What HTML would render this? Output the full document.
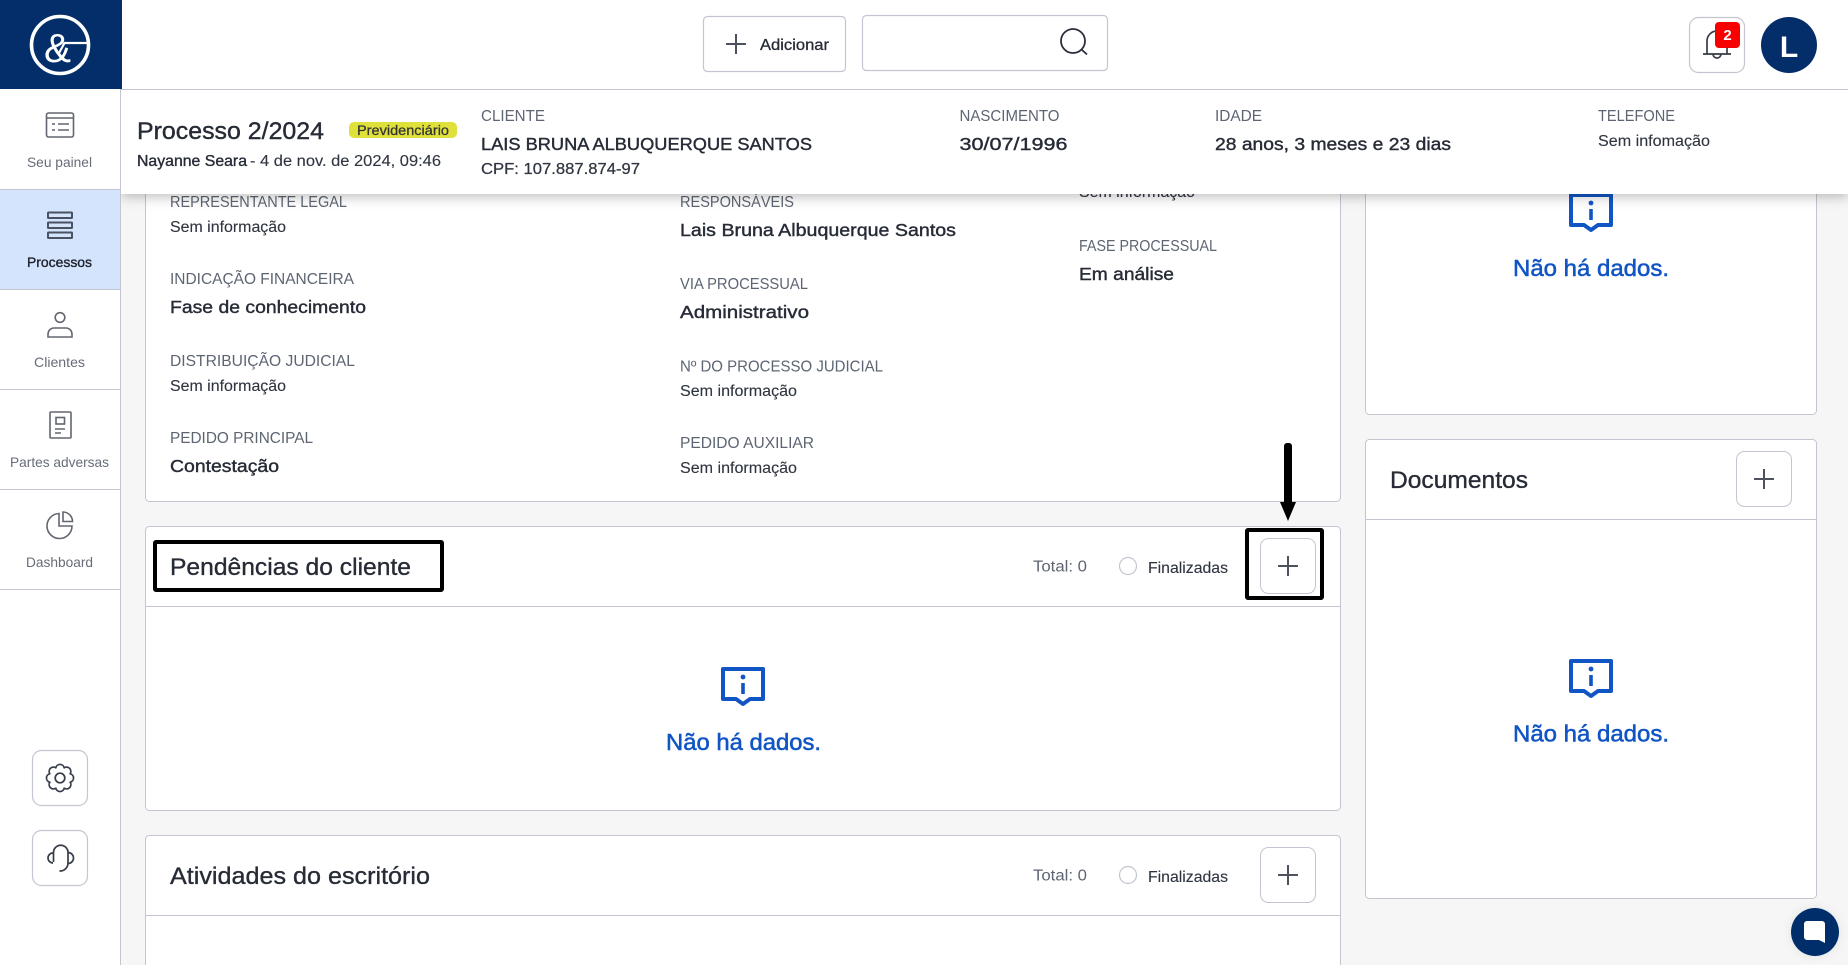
<!DOCTYPE html>
<html lang="pt-BR">
<head>
<meta charset="utf-8">
<title>Processo 2/2024</title>
<style>
html,body{margin:0;padding:0;width:1848px;height:965px;overflow:hidden;background:#f6f6f6}
svg{display:block;width:1848px;height:965px;overflow:hidden}
text{font-family:"Liberation Sans",sans-serif;white-space:pre}
.l{font-size:15.5px;fill:#5d6573;transform:translateY(-.8px)}
.b{font-size:15.5px;fill:#2f3540;stroke:#2f3540;stroke-width:.12}
.v{font-size:17.5px;fill:#262b36;stroke:#262b36;stroke-width:.4}
.h{font-size:24px;fill:#262b36;stroke:#262b36;stroke-width:.35}
.n{font-size:14px;fill:#666c78}
.e{font-size:23.5px;fill:#1155c4;stroke:#1155c4;stroke-width:.55}
.card{fill:#fff;stroke:#c3c6d0;stroke-width:1}
.line{stroke:#c3c6d0;stroke-width:1}
.ic{fill:none;stroke:#62666f;stroke-width:1.6}
.ib{fill:none;stroke:#363c48;stroke-width:1.7}
.pl{stroke:#4d525c;stroke-width:2}
.anno{fill:none;stroke:#000;stroke-width:4}
</style>
</head>
<body>
<svg width="1848" height="965" viewBox="0 0 1848 965" xmlns="http://www.w3.org/2000/svg">
<defs>
<filter id="sh" x="-2%" y="-20%" width="104%" height="160%"><feDropShadow dx="0" dy="3" stdDeviation="6" flood-color="#000" flood-opacity=".25"/></filter>
<filter id="sh2" x="-30%" y="-30%" width="160%" height="160%"><feDropShadow dx="0" dy="0" stdDeviation="5" flood-color="#000" flood-opacity=".08"/></filter>
</defs>

<rect width="1848" height="965" fill="#f6f6f6"/>

<!-- Card 1 -->
<rect class="card" x="145.5" y="120.5" width="1195" height="381" rx="4"/>
<text class="b" x="1079" y="197" textLength="116" lengthAdjust="spacingAndGlyphs">Sem informação</text>
<text class="l" x="170" y="208" textLength="177" lengthAdjust="spacingAndGlyphs">REPRESENTANTE LEGAL</text>
<text class="b" x="170" y="232" textLength="116" lengthAdjust="spacingAndGlyphs">Sem informação</text>
<text class="l" x="170" y="285" textLength="184" lengthAdjust="spacingAndGlyphs">INDICAÇÃO FINANCEIRA</text>
<text class="v" x="170" y="313" textLength="196" lengthAdjust="spacingAndGlyphs">Fase de conhecimento</text>
<text class="l" x="170" y="367" textLength="185" lengthAdjust="spacingAndGlyphs">DISTRIBUIÇÃO JUDICIAL</text>
<text class="b" x="170" y="391" textLength="116" lengthAdjust="spacingAndGlyphs">Sem informação</text>
<text class="l" x="170" y="444" textLength="143" lengthAdjust="spacingAndGlyphs">PEDIDO PRINCIPAL</text>
<text class="v" x="170" y="472" textLength="109" lengthAdjust="spacingAndGlyphs">Contestação</text>

<text class="l" x="680" y="208" textLength="114" lengthAdjust="spacingAndGlyphs">RESPONSÁVEIS</text>
<text class="v" x="680" y="236" textLength="276" lengthAdjust="spacingAndGlyphs">Lais Bruna Albuquerque Santos</text>
<text class="l" x="680" y="290" textLength="128" lengthAdjust="spacingAndGlyphs">VIA PROCESSUAL</text>
<text class="v" x="680" y="318" textLength="129" lengthAdjust="spacingAndGlyphs">Administrativo</text>
<text class="l" x="680" y="372.500" textLength="203" lengthAdjust="spacingAndGlyphs">Nº DO PROCESSO JUDICIAL</text>
<text class="b" x="680" y="396" textLength="117" lengthAdjust="spacingAndGlyphs">Sem informação</text>
<text class="l" x="680" y="449" textLength="134" lengthAdjust="spacingAndGlyphs">PEDIDO AUXILIAR</text>
<text class="b" x="680" y="473" textLength="117" lengthAdjust="spacingAndGlyphs">Sem informação</text>

<text class="l" x="1079" y="252" textLength="138" lengthAdjust="spacingAndGlyphs">FASE PROCESSUAL</text>
<text class="v" x="1079" y="280" textLength="95" lengthAdjust="spacingAndGlyphs">Em análise</text>

<!-- Pendências -->
<rect class="card" x="145.5" y="526.5" width="1195" height="284" rx="4"/>
<line class="line" x1="146" y1="606.500" x2="1340" y2="606.500"/>
<text class="h" x="170" y="575" textLength="241" lengthAdjust="spacingAndGlyphs">Pendências do cliente</text>
<text class="l" x="1033" y="572.500" textLength="54" lengthAdjust="spacingAndGlyphs">Total: 0</text>
<circle cx="1128" cy="566" r="8.5" fill="#fff" stroke="#c3c6d0" stroke-width="1.2"/>
<text class="b" x="1148" y="573" textLength="80" lengthAdjust="spacingAndGlyphs">Finalizadas</text>
<rect x="1260.5" y="538.5" width="55" height="55" rx="8" fill="#fff" stroke="#c3c6d0"/>
<path class="pl" d="M1288 556v20M1278 566h20"/>

<path d="M723 669H763V699H750L743 704L736 699H723Z" fill="none" stroke="#1155c4" stroke-width="4" stroke-linejoin="round"/>
<circle cx="743" cy="677" r="2.4" fill="#1155c4"/>
<line x1="743" y1="683" x2="743" y2="694" stroke="#1155c4" stroke-width="3.6"/>
<text class="e" x="666" y="750" textLength="155" lengthAdjust="spacingAndGlyphs">Não há dados.</text>

<!-- Atividades (runs off the bottom of the frame, so no bottom edge is drawn) -->
<path class="card" d="M145.500 965V839.500A4 4 0 0 1 149.500 835.500H1336.500A4 4 0 0 1 1340.500 839.500V965"/>
<line class="line" x1="146" y1="915.500" x2="1340" y2="915.500"/>
<text class="h" x="170" y="884" textLength="260" lengthAdjust="spacingAndGlyphs">Atividades do escritório</text>
<text class="l" x="1033" y="881.500" textLength="54" lengthAdjust="spacingAndGlyphs">Total: 0</text>
<circle cx="1128" cy="875" r="8.5" fill="#fff" stroke="#c3c6d0" stroke-width="1.2"/>
<text class="b" x="1148" y="882" textLength="80" lengthAdjust="spacingAndGlyphs">Finalizadas</text>
<rect x="1260.5" y="847.5" width="55" height="55" rx="8" fill="#fff" stroke="#c3c6d0"/>
<path class="pl" d="M1288 865v20M1278 875h20"/>

<!-- Right column -->
<rect class="card" x="1365.5" y="120.5" width="451" height="294" rx="4"/>
<path d="M1571 195H1611V225H1598L1591 230L1584 225H1571Z" fill="none" stroke="#1155c4" stroke-width="4" stroke-linejoin="round"/>
<circle cx="1591" cy="203" r="2.4" fill="#1155c4"/>
<line x1="1591" y1="209" x2="1591" y2="220" stroke="#1155c4" stroke-width="3.6"/>
<text class="e" x="1513" y="276" textLength="156" lengthAdjust="spacingAndGlyphs">Não há dados.</text>

<rect class="card" x="1365.5" y="439.5" width="451" height="459" rx="4"/>
<line class="line" x1="1366" y1="519.500" x2="1816" y2="519.500"/>
<text class="h" x="1390" y="488" textLength="138" lengthAdjust="spacingAndGlyphs">Documentos</text>
<rect x="1736.5" y="451.5" width="55" height="55" rx="8" fill="#fff" stroke="#c3c6d0"/>
<path class="pl" d="M1764 469v20M1754 479h20"/>
<path d="M1571 661H1611V691H1598L1591 696L1584 691H1571Z" fill="none" stroke="#1155c4" stroke-width="4" stroke-linejoin="round"/>
<circle cx="1591" cy="669" r="2.4" fill="#1155c4"/>
<line x1="1591" y1="675" x2="1591" y2="686" stroke="#1155c4" stroke-width="3.6"/>
<text class="e" x="1513" y="741.500" textLength="156" lengthAdjust="spacingAndGlyphs">Não há dados.</text>

<!-- Annotations -->
<rect class="anno" x="155" y="542" width="287" height="48" rx="1"/>
<rect class="anno" x="1247" y="530" width="75" height="68" rx="1"/>
<rect x="1284" y="443" width="8" height="62" rx="3" fill="#000"/>
<path d="M1280 502H1296L1288 521Z" fill="#000"/>

<!-- Chat -->
<circle cx="1815" cy="932" r="24" fill="#032e6a" filter="url(#sh2)"/>
<path d="M1807 921H1822A3 3 0 0 1 1825 924V943L1819 940H1807A3 3 0 0 1 1804 937V924A3 3 0 0 1 1807 921Z" fill="#fff"/>

<!-- Process header -->
<rect x="121" y="90" width="1727" height="104" fill="#fff" filter="url(#sh)"/>
<text x="137" y="139" font-size="24" fill="#262b36" stroke="#262b36" stroke-width=".4" textLength="187" lengthAdjust="spacingAndGlyphs">Processo 2/2024</text>
<rect x="349" y="122" width="108" height="16" rx="5" fill="#dfe03a"/>
<text x="357" y="135" font-size="13.5" fill="#333" stroke="#333" stroke-width=".25" textLength="92" lengthAdjust="spacingAndGlyphs">Previdenciário</text>
<text x="137" y="166" font-size="15.5" fill="#262b36" stroke="#262b36" stroke-width=".35" textLength="110" lengthAdjust="spacingAndGlyphs">Nayanne Seara</text>
<text class="b" x="250" y="166" textLength="191" lengthAdjust="spacingAndGlyphs">- 4 de nov. de 2024, 09:46</text>

<text class="l" x="481" y="122" textLength="64" lengthAdjust="spacingAndGlyphs">CLIENTE</text>
<text class="v" x="481" y="150" textLength="331" lengthAdjust="spacingAndGlyphs">LAIS BRUNA ALBUQUERQUE SANTOS</text>
<text x="481" y="174" font-size="15.5" fill="#2f3540" stroke="#2f3540" stroke-width=".25" textLength="159" lengthAdjust="spacingAndGlyphs">CPF: 107.887.874-97</text>

<text class="l" x="959.500" y="122" textLength="100" lengthAdjust="spacingAndGlyphs">NASCIMENTO</text>
<text class="v" x="959.500" y="150" textLength="108" lengthAdjust="spacingAndGlyphs">30/07/1996</text>
<text class="l" x="1215" y="122" textLength="47" lengthAdjust="spacingAndGlyphs">IDADE</text>
<text class="v" x="1215" y="150" textLength="236" lengthAdjust="spacingAndGlyphs">28 anos, 3 meses e 23 dias</text>
<text class="l" x="1598" y="122" textLength="77" lengthAdjust="spacingAndGlyphs">TELEFONE</text>
<text class="b" x="1598" y="146" textLength="112" lengthAdjust="spacingAndGlyphs">Sem infomação</text>

<!-- Top bar -->
<rect x="121" y="0" width="1727" height="89" fill="#fff"/>
<line class="line" x1="121" y1="89.500" x2="1848" y2="89.500"/>
<rect x="703.500" y="16.500" width="142" height="55" rx="4" fill="#fff" stroke="#c3c6d0" stroke-width="1.200"/>
<path d="M736 34v20M726 44h20" stroke="#4d525c" stroke-width="2"/>
<text x="760" y="50" font-size="15.5" fill="#262b36" stroke="#262b36" stroke-width=".3" textLength="69" lengthAdjust="spacingAndGlyphs">Adicionar</text>
<rect x="862.500" y="15.500" width="245" height="55" rx="4" fill="#fff" stroke="#c3c6d0" stroke-width="1.200"/>
<circle cx="1073" cy="41" r="12" fill="none" stroke="#2a2f3a" stroke-width="1.800"/>
<line x1="1081" y1="49" x2="1087" y2="54.500" stroke="#2a2f3a" stroke-width="1.800"/>

<rect x="1689.500" y="17.500" width="55" height="55" rx="9" fill="#fff" stroke="#c3c6d0" stroke-width="1.200"/>
<path class="ib" d="M1707 54V41A10 10 0 0 1 1727 41V54M1703 54H1731M1713 54A4 4 0 0 0 1721 54"/>
<rect x="1715" y="22" width="25" height="26" rx="4" fill="#f80000"/>
<text x="1727.500" y="40" font-size="15" font-weight="700" fill="#fff" text-anchor="middle">2</text>
<circle cx="1789" cy="45" r="28" fill="#032e6a"/>
<text x="1789" y="57" font-size="30" font-weight="700" fill="#fff" text-anchor="middle">L</text>

<!-- Sidebar -->
<rect x="0" y="0" width="120" height="965" fill="#fff"/>
<line class="line" x1="120.500" y1="89" x2="120.500" y2="965"/>
<rect x="0" y="0" width="122" height="89" fill="#032e6a"/>
<circle cx="60" cy="45" r="28.500" fill="none" stroke="#fff" stroke-width="3.600"/>
<text x="44" y="62" font-size="41" fill="#fff" textLength="27" lengthAdjust="spacingAndGlyphs">&amp;</text>
<path d="M58.500 54L64.500 43H89" fill="none" stroke="#fff" stroke-width="2.200"/>

<rect x="0" y="190" width="120" height="99" fill="#d5e4fd"/>
<g class="line"><line x1="0" y1="189.500" x2="120" y2="189.500"/><line x1="0" y1="289.500" x2="120" y2="289.500"/><line x1="0" y1="389.500" x2="120" y2="389.500"/><line x1="0" y1="489.500" x2="120" y2="489.500"/><line x1="0" y1="589.500" x2="120" y2="589.500"/></g>

<rect class="ic" x="46.500" y="113" width="27" height="24" rx="2"/>
<path class="ic" d="M46.500 118H73.500M52 124H55M58 124H69M52 130H55M58 130H69"/>
<text class="n" x="27" y="167" textLength="65" lengthAdjust="spacingAndGlyphs">Seu painel</text>

<g fill="none" stroke="#4a5160" stroke-width="2"><rect x="48" y="212.500" width="24" height="5.500" rx=".5"/><rect x="48" y="222.500" width="24" height="5.500" rx=".5"/><rect x="48" y="232.500" width="24" height="5.500" rx=".5"/></g>
<text x="27" y="267" font-size="14" fill="#1c2029" stroke="#1c2029" stroke-width=".35" textLength="65" lengthAdjust="spacingAndGlyphs">Processos</text>

<circle class="ic" cx="60" cy="317.500" r="4.800"/>
<path class="ic" d="M48 337V334A6 6 0 0 1 54 328H66A6 6 0 0 1 72 334V337Z"/>
<text class="n" x="34" y="367" textLength="51" lengthAdjust="spacingAndGlyphs">Clientes</text>

<rect class="ic" x="50" y="412" width="21" height="26" rx="1"/>
<rect class="ic" x="56" y="417.500" width="8.500" height="6.500"/>
<path class="ic" d="M55 429H65M55 433H61"/>
<text class="n" x="10" y="467" textLength="99" lengthAdjust="spacingAndGlyphs">Partes adversas</text>

<path class="ic" d="M59 513.500A12.500 12.500 0 1 0 72 526H59Z"/>
<path class="ic" d="M63 512A9.500 9.500 0 0 1 72.500 521.500H63Z"/>
<text class="n" x="26" y="567" textLength="67" lengthAdjust="spacingAndGlyphs">Dashboard</text>

<rect x="32.500" y="750.500" width="55" height="55" rx="9" fill="#fff" stroke="#c3c6d0" stroke-width="1.200"/>
<circle class="ib" cx="60" cy="778" r="4.800"/>
<path class="ib" stroke-linejoin="round" d="M70.160 782.200A4.300 4.300 0 0 1 64.200 788.160A4.300 4.300 0 0 1 55.800 788.160A4.300 4.300 0 0 1 49.840 782.200A4.300 4.300 0 0 1 49.840 773.800A4.300 4.300 0 0 1 55.800 767.840A4.300 4.300 0 0 1 64.200 767.840A4.300 4.300 0 0 1 70.160 773.800A4.300 4.300 0 0 1 70.160 782.200Z"/>

<rect x="32.500" y="830.500" width="55" height="55" rx="9" fill="#fff" stroke="#c3c6d0" stroke-width="1.200"/>
<path class="ib" d="M53.500 862V852.500A7.250 7.250 0 0 1 68 852.500V863A8 8 0 0 1 59.500 871M53 853A5 5 0 0 0 53 863M68 852.500A5.500 5.500 0 0 1 68 863.500"/>
</svg>
</body>
</html>
